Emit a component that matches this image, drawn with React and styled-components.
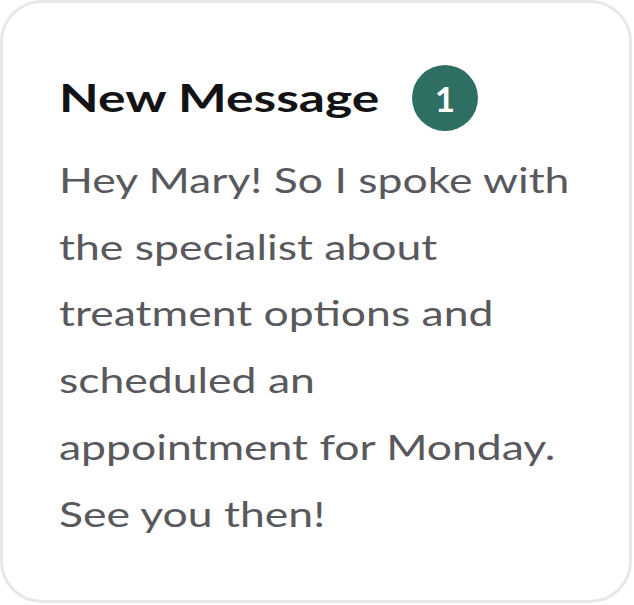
import React from "react";
import styled, { createGlobalStyle } from "styled-components";

const GlobalStyle = createGlobalStyle`
  body {
    margin: 0;
    background: #ffffff;
    font-family: Lato, "Noto Sans", sans-serif;
  }
`;

const Card = styled.div`
  box-sizing: border-box;
  width: 632px;
  height: 603px;
  border: 3px solid #e8e8ea;
  border-radius: 42px;
  background: #ffffff;
  padding: 62px 40px 0 56px;
  overflow: hidden;
`;

const Header = styled.div`
  display: flex;
  align-items: flex-start;
  height: 66px;
`;

const TitleBox = styled.div`
  width: 353px;
  height: 66px;
`;

const Title = styled.h2`
  display: inline-block;
  margin: -1px 0 0;
  font-size: 38.5px;
  line-height: 66px;
  font-weight: 700;
  color: #131315;
  white-space: nowrap;
  transform: scaleX(1.34);
  transform-origin: left center;
`;

const Badge = styled.span`
  display: flex;
  align-items: center;
  justify-content: center;
  flex-shrink: 0;
  width: 66px;
  height: 66px;
  border-radius: 50%;
  background: #2e6e63;
  color: #ffffff;
  font-size: 35px;
  font-weight: 700;
`;

const Body = styled.p`
  width: 400px;
  margin: 16px 0 0;
  font-size: 34.5px;
  line-height: 66.7px;
  color: #59595d;
  transform: scaleX(1.29);
  transform-origin: left top;
`;

const Line = styled.span`
  display: block;
  white-space: nowrap;
`;

const lines = [
  "Hey Mary! So I spoke with",
  "the specialist about",
  "treatment options and",
  "scheduled an",
  "appointment for Monday.",
  "See you then!",
];

const App = () => {
  return (
    <>
      <GlobalStyle />
      <Card>
        <Header>
          <TitleBox>
            <Title>New Message</Title>
          </TitleBox>
          <Badge>1</Badge>
        </Header>
        <Body>
          {lines.map((line) => (
            <Line key={line}>{line}</Line>
          ))}
        </Body>
      </Card>
    </>
  );
};

export default App;
